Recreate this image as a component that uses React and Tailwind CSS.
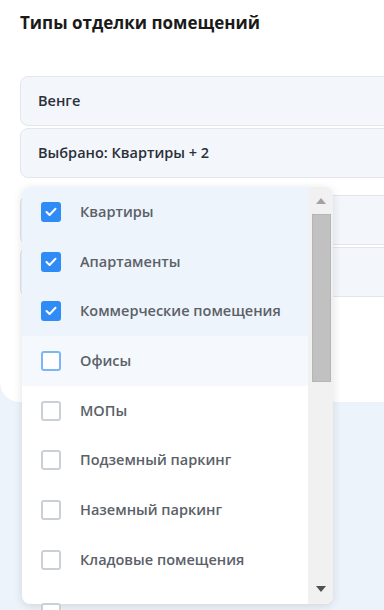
import React from "react";

const items = [
  { label: "Квартиры", checked: true },
  { label: "Апартаменты", checked: true },
  { label: "Коммерческие помещения", checked: true },
  { label: "Офисы", checked: false, hover: true },
  { label: "МОПы", checked: false },
  { label: "Подземный паркинг", checked: false },
  { label: "Наземный паркинг", checked: false },
  { label: "Кладовые помещения", checked: false },
];

function Box({ checked, hover }) {
  if (checked) {
    return (
      <span className="flex h-5 w-5 shrink-0 items-center justify-center rounded-[3px] bg-[#2f8bf5]">
        <svg width="12" height="10" viewBox="0 0 12 10" fill="none">
          <path d="M1.5 5 L4.6 8 L10.5 1.8" stroke="white" strokeWidth="2" strokeLinecap="round" strokeLinejoin="round" />
        </svg>
      </span>
    );
  }
  return (
    <span
      className={
        "block h-5 w-5 shrink-0 rounded-[3px] border-2 bg-white " +
        (hover ? "border-[#7db6f8]" : "border-[#cbd0d6]")
      }
    />
  );
}

function Field({ children }) {
  return (
    <div className="flex h-[50px] items-center rounded-lg border border-[#e2e6eb] bg-[#f3f7fc] pl-[17px] text-[14.5px] font-semibold text-[#2b3038]">
      {children}
    </div>
  );
}

export default function App() {
  return (
    <div
      className="relative h-[610px] w-[384px] overflow-hidden bg-[#edf3fa]"
      style={{ fontFamily: '"Open Sans", "Noto Sans", sans-serif' }}
    >
      {/* Card */}
      <div className="h-[402px] w-[440px] rounded-bl-[20px] bg-white pl-5 pt-[10px]">
        <h2 className="text-[17px] font-bold text-[#1a1a1a]">Типы отделки помещений</h2>
        <div className="mt-[40px] flex flex-col gap-[2px]">
          <Field>Венге</Field>
          <Field>Выбрано: Квартиры + 2</Field>
        </div>
        <div className="mt-[17px] flex flex-col gap-[2px]">
          <Field />
          <Field />
        </div>
      </div>

      {/* Dropdown */}
      <div className="absolute left-[22px] top-[187px] flex h-[417px] w-[311px] overflow-hidden rounded-lg bg-white shadow-[0_2px_10px_rgba(0,0,0,0.12)]">
        <div className="flex-1">
          {items.map((it, i) => (
            <div
              key={it.label}
              className={
                "flex h-[49.7px] items-center gap-[19px] pl-[19px] " +
                (i < 3 ? "bg-[#eef4fb]" : it.hover ? "bg-[#f5f9fd]" : "bg-white")
              }
            >
              <Box checked={it.checked} hover={it.hover} />
              <span className="whitespace-nowrap text-[14.5px] font-semibold text-[#5b6169]">{it.label}</span>
            </div>
          ))}
        </div>
        {/* Scrollbar */}
        <div className="flex w-[25px] shrink-0 flex-col items-center bg-[#f1f1f1] pl-[1px]">
          <div className="flex h-[27px] items-center justify-center">
            <svg width="10" height="6" viewBox="0 0 10 6">
              <path d="M0 6 L5 0 L10 6 Z" fill="#a3a3a3" />
            </svg>
          </div>
          <div className="h-[168px] w-[19px] border border-[#b5b5b5] bg-[#c1c1c1]" />
          <div className="flex-1" />
          <div className="flex h-[30px] items-center justify-center">
            <svg width="10" height="6" viewBox="0 0 10 6">
              <path d="M0 0 L10 0 L5 6 Z" fill="#505050" />
            </svg>
          </div>
        </div>
      </div>

      {/* next row peeking below list */}
      <span className="absolute left-[41px] top-[603px] block h-5 w-5 rounded-[3px] border-2 border-[#cbd0d6] bg-white" />
    </div>
  );
}
